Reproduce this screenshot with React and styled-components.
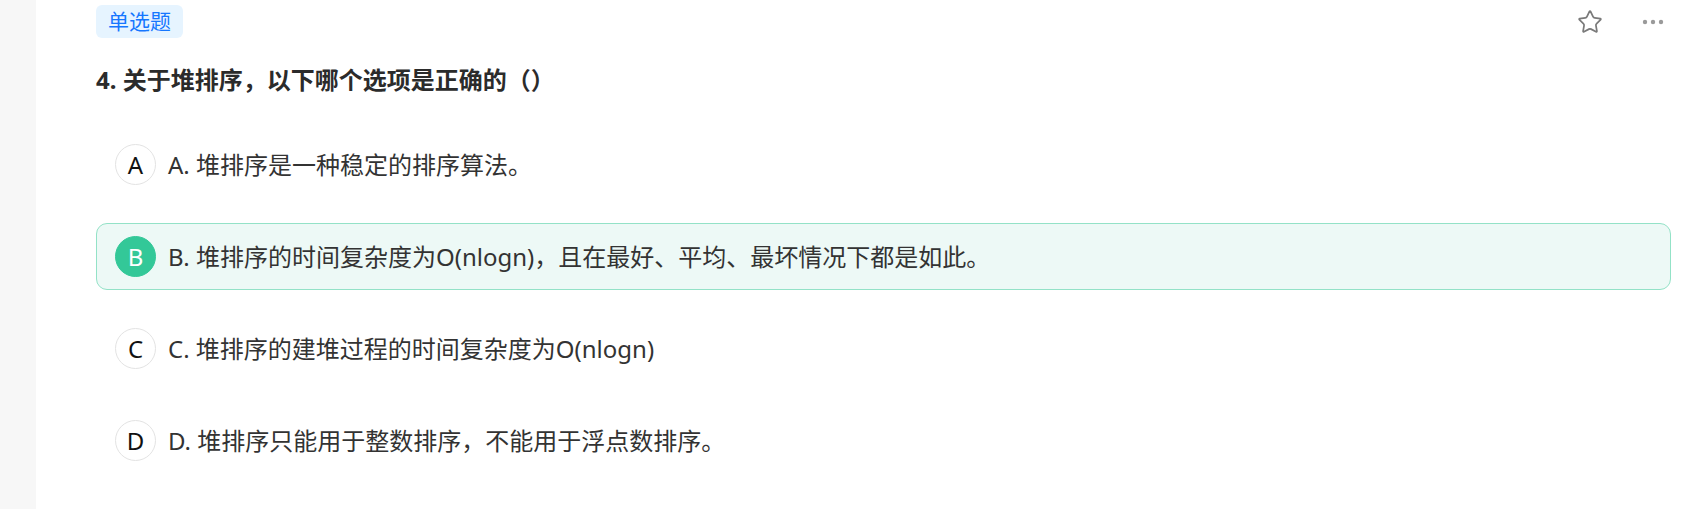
import React from "react";
import styled, { createGlobalStyle } from "styled-components";
import { Star } from "lucide-react";

const GlobalStyle = createGlobalStyle`
  html, body {
    margin: 0;
    padding: 0;
    background: #ffffff;
  }
  #root {
    height: 100vh;
  }
`;

const Page = styled.div`
  display: flex;
  height: 100%;
  font-family: "Noto Sans", "Noto Sans CJK SC", sans-serif;
  color: #333333;
`;

const Strip = styled.div`
  width: 36px;
  flex-shrink: 0;
  background: #f7f7f7;
`;

const Main = styled.div`
  flex: 1;
  display: flex;
  flex-direction: column;
  padding: 5px 24px 0 60px;
`;

const Header = styled.div`
  display: flex;
  align-items: center;
  justify-content: space-between;
  height: 33px;
`;

const Tag = styled.span`
  display: inline-flex;
  align-items: center;
  height: 33px;
  padding: 0 12px;
  border-radius: 6px;
  background: #e6f4ff;
  color: #1677ff;
  font-size: 21px;
  line-height: 1;
`;

const Tools = styled.div`
  display: flex;
  align-items: center;
  gap: 38px;
  padding-right: 6px;
  color: #7a7a7a;
`;

const IconButton = styled.span`
  display: inline-flex;
  align-items: center;
  justify-content: center;
  cursor: pointer;
`;

const Title = styled.h3`
  margin: 24px 0 33px;
  font-size: 24px;
  line-height: 36px;
  font-weight: 700;
  color: #2b2b2b;
`;

const Options = styled.div`
  display: flex;
  flex-direction: column;
  gap: 25px;
`;

const Option = styled.div`
  display: flex;
  align-items: center;
  gap: 12px;
  height: 67px;
  box-sizing: border-box;
  padding: 0 18px;
  border: 1px solid ${(p) => (p.$active ? "#93e2c7" : "transparent")};
  border-radius: 11px;
  background: ${(p) => (p.$active ? "#edf9f6" : "transparent")};
  cursor: pointer;
`;

const Letter = styled.span`
  display: inline-flex;
  align-items: center;
  justify-content: center;
  width: 41px;
  height: 41px;
  box-sizing: border-box;
  border-radius: 50%;
  border: 1px solid ${(p) => (p.$active ? "#33c898" : "#e3e3e3")};
  background: ${(p) => (p.$active ? "#33c898" : "#ffffff")};
  color: ${(p) => (p.$active ? "#ffffff" : "#111111")};
  font-size: 24px;
  line-height: 1;
  flex-shrink: 0;
`;

const OptionText = styled.span`
  font-size: 24px;
  line-height: 1.5;
  color: #333333;
`;

const MoreIcon = () => (
  <svg width="24" height="24" viewBox="0 0 24 24" fill="#9a9a9a">
    <circle cx="4" cy="12" r="2.2" />
    <circle cx="12" cy="12" r="2.2" />
    <circle cx="20" cy="12" r="2.2" />
  </svg>
);

const options = [
  { key: "A", text: "A. 堆排序是一种稳定的排序算法。" },
  {
    key: "B",
    text: "B. 堆排序的时间复杂度为O(nlogn)，且在最好、平均、最坏情况下都是如此。",
  },
  { key: "C", text: "C. 堆排序的建堆过程的时间复杂度为O(nlogn)" },
  { key: "D", text: "D. 堆排序只能用于整数排序，不能用于浮点数排序。" },
];

const App = () => {
  const selected = "B";
  return (
    <>
      <GlobalStyle />
      <Page>
        <Strip />
        <Main>
          <Header>
            <Tag>单选题</Tag>
            <Tools>
              <IconButton>
                <Star size={26} strokeWidth={1.6} />
              </IconButton>
              <IconButton>
                <MoreIcon />
              </IconButton>
            </Tools>
          </Header>
          <Title>4. 关于堆排序，以下哪个选项是正确的（）</Title>
          <Options>
            {options.map((o) => (
              <Option key={o.key} $active={o.key === selected}>
                <Letter $active={o.key === selected}>{o.key}</Letter>
                <OptionText>{o.text}</OptionText>
              </Option>
            ))}
          </Options>
        </Main>
      </Page>
    </>
  );
};

export default App;
